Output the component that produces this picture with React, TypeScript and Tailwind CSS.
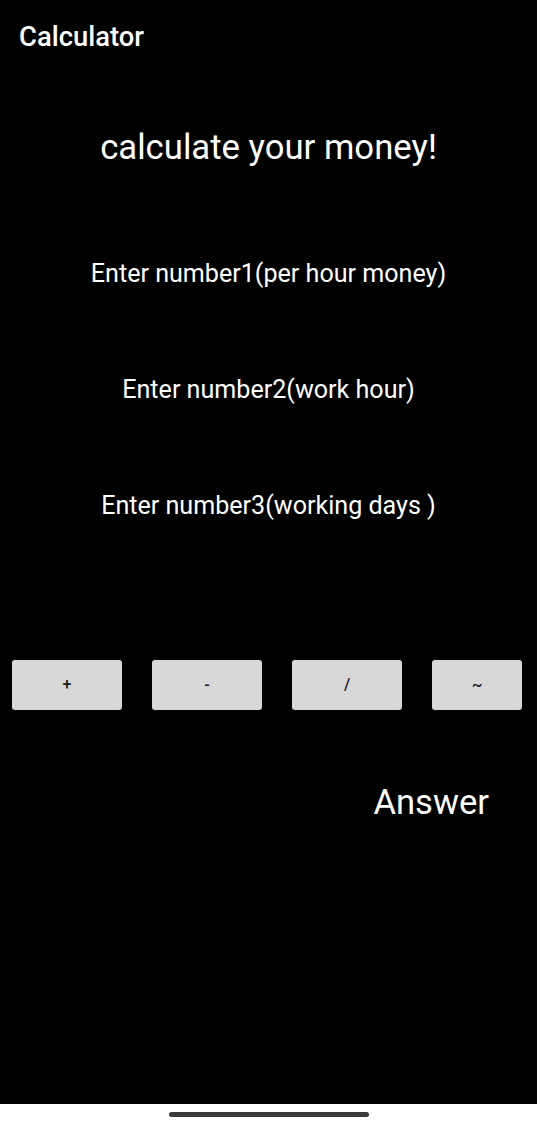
import React from "react";

const ops = ["+", "-", "/", "~"];
const labels = [
  "Enter number1(per hour money)",
  "Enter number2(work hour)",
  "Enter number3(working days )",
];

export default function App() {
  return (
    <div className="flex min-h-[1125px] flex-col bg-white font-['Roboto',sans-serif]">
      <main className="flex h-[1104px] flex-col bg-black text-white">
        {/* app bar */}
        <header className="flex h-[72px] items-center px-[19px] pt-[3px]">
          <h2 className="text-[27.4px] font-medium leading-none">Calculator</h2>
        </header>

        <h1 className="mt-[53px] text-center text-[34.7px] leading-[44px]">
          calculate your money!
        </h1>

        {labels.map((label, i) => (
          <p
            key={label}
            className={`text-center text-[25.1px] leading-[40px] ${
              i === 0 ? "mt-[85px]" : "mt-[76px]"
            }`}>
            {label}
          </p>
        ))}

        {/* operator buttons */}
        <div className="mt-[134px] flex gap-[30px] px-[12px]">
          {ops.map((op, i) => (
            <button
              key={op}
              className={`flex h-[50px] items-center justify-center rounded-[3px] bg-[#d7d8d7] text-[16px] font-medium text-[#1a1a1a] ${
                i === 3 ? "w-[90px]" : "w-[110px]"
              }`}>
              {op}
            </button>
          ))}
        </div>

        <div className="mt-[70px] flex justify-end pr-[48px]">
          <span className="text-[34.6px] leading-[44px]">Answer</span>
        </div>
      </main>

      {/* gesture bar */}
      <div className="flex h-[21px] items-center justify-center">
        <div className="h-[5px] w-[200px] rounded-full bg-[#3a3a3a]" />
      </div>
    </div>
  );
}
